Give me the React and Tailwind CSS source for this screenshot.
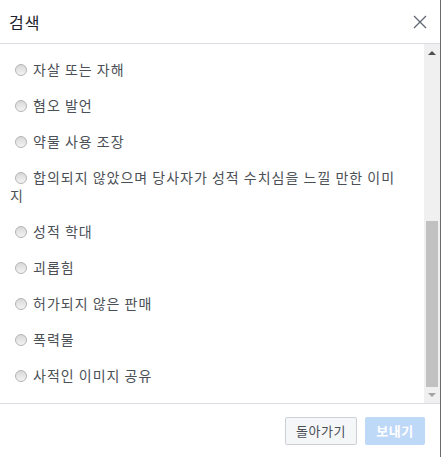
import React from "react";

const options = [
  "자살 또는 자해",
  "혐오 발언",
  "약물 사용 조장",
  "합의되지 않았으며 당사자가 성적 수치심을 느낄 만한 이미지",
  "성적 학대",
  "괴롭힘",
  "허가되지 않은 판매",
  "폭력물",
  "사적인 이미지 공유",
];

function Radio() {
  // old-style grey radio button
  return (
    <span className="inline-block align-[-1px] w-[12px] h-[12px] ml-[5px] mr-[6px] rounded-full border border-[#b4b4b4] bg-gradient-to-b from-[#d8d8d8] to-[#f4f4f4]" />
  );
}

function ScrollBar() {
  return (
    <div className="w-[16px] flex flex-col bg-[#f0f0f0]">
      <div className="h-[17px] flex items-center justify-center">
        <svg width="8" height="5" viewBox="0 0 8 5">
          <path d="M0 5 L4 1 L8 5 Z" fill="#505050" />
        </svg>
      </div>
      <div className="flex-1 flex flex-col px-[2px]">
        <div className="h-[161px]" />
        <div className="h-[166px] bg-[#c1c1c1]" />
      </div>
      <div className="h-[17px] flex items-center justify-center">
        <svg width="8" height="5" viewBox="0 0 8 5">
          <path d="M0 0 L4 4 L8 0 Z" fill="#a3a3a3" />
        </svg>
      </div>
    </div>
  );
}

export default function App() {
  return (
    <div
      className="w-[442px] h-[457px] bg-white flex"
      style={{ fontFamily: '"Noto Sans CJK KR", "Noto Sans", sans-serif' }}
    >
      <div className="w-[441px] h-full flex flex-col border-r border-[#6b6b6b]">
        {/* header */}
        <div className="h-[44px] flex items-center justify-between pl-[9px] pr-[13px] border-b border-[#dadde1]">
          <span className="text-[16px] leading-[20px] tracking-[1px] text-[#1d2129]">검색</span>
          <svg width="14" height="14" viewBox="0 0 14 14">
            <path d="M1 1 L13 13 M13 1 L1 13" stroke="#606770" strokeWidth="1.3" />
          </svg>
        </div>

        {/* body */}
        <div className="h-[360px] flex border-b border-[#dadde1]">
          <div className="flex-1 pl-[10px] pr-[22px] pt-[16px] flex flex-col gap-[18px] text-[14px] leading-[18px] tracking-[1px] text-[#4b4f56]">
            {options.map((o) => (
              <div key={o}>
                <Radio />
                {o}
              </div>
            ))}
          </div>
          <ScrollBar />
        </div>

        {/* footer */}
        <div className="flex-1 flex items-center justify-end gap-[8px] pr-[15px]">
          <button className="h-[28px] w-[72px] rounded-[2px] border border-[#ccd0d5] bg-[#f5f6f7] text-[13px] tracking-[0.5px] text-[#4b4f56]">
            돌아가기
          </button>
          <button className="h-[28px] w-[60px] rounded-[2px] bg-[#bed8f7] text-[13px] font-bold tracking-[0.5px] text-white">
            보내기
          </button>
        </div>
      </div>
    </div>
  );
}
